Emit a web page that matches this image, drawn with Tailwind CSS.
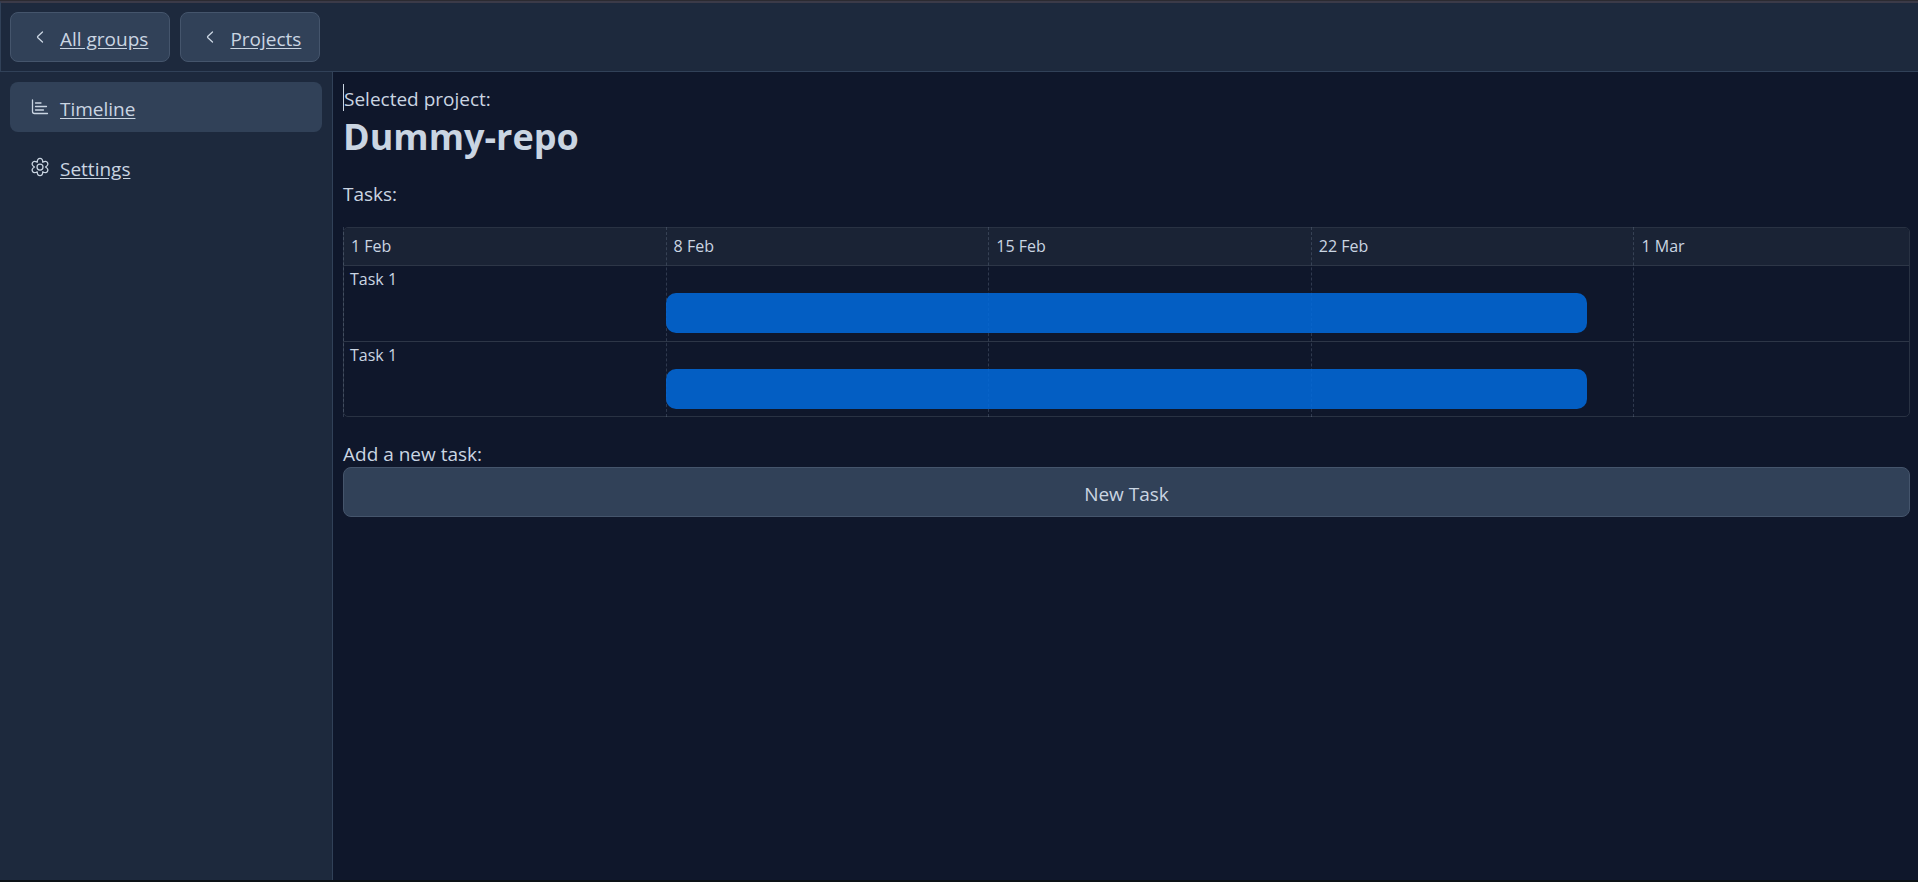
<!DOCTYPE html>
<html lang="en">
<head>
<meta charset="utf-8">
<title>Dummy-repo – Timeline</title>
<script src="https://cdn.jsdelivr.net/npm/@tailwindcss/browser@4"></script>
</head>
<body class="flex min-h-screen flex-col bg-slate-900 font-['Segoe_UI','Open_Sans',sans-serif] text-[19px] leading-[30px] text-slate-300">
<div class="h-px bg-[#2b2a31]"></div>
<header class="flex gap-[10px] border border-t-2 border-r-0 border-slate-700 border-t-[#3b3a48] bg-slate-800 p-[9px]">
  <a href="#" class="flex h-[50px] items-center gap-[10px] rounded-[8px] border border-slate-600 bg-slate-700 pr-[21px] pl-[19px]">
    <svg class="size-5" viewBox="0 0 20 20" fill="none" stroke="currentColor" stroke-width="1.3" stroke-linecap="round" stroke-linejoin="round" aria-hidden="true"><path d="M12.500 5 7.900 9.300Q7.200 10 7.900 10.700L12.500 15"/></svg>
    <span class="mt-1 underline underline-offset-2">All groups</span>
  </a>
  <a href="#" class="flex h-[50px] items-center gap-[10px] rounded-[8px] border border-slate-600 bg-slate-700 pr-[18px] pl-[19px]">
    <svg class="size-5" viewBox="0 0 20 20" fill="none" stroke="currentColor" stroke-width="1.3" stroke-linecap="round" stroke-linejoin="round" aria-hidden="true"><path d="M12.500 5 7.900 9.300Q7.200 10 7.900 10.700L12.500 15"/></svg>
    <span class="mt-1 underline underline-offset-2">Projects</span>
  </a>
</header>
<div class="flex flex-1">
  <nav class="flex w-[333px] shrink-0 flex-col gap-[10px] border-r border-slate-700 bg-slate-800 p-[10px]">
    <a href="#" class="flex h-[50px] items-center gap-[10px] rounded-[8px] bg-slate-700 px-5">
      <svg class="size-5" viewBox="0 0 20 20" fill="none" stroke="currentColor" stroke-width="1.3" stroke-linecap="round" aria-hidden="true"><path d="M2.500 3v11.500a2 2 0 0 0 2 2H17.500M5.500 6H11M5.500 9.500h11M5.500 13h8"/></svg>
      <span class="mt-1 underline underline-offset-2">Timeline</span>
    </a>
    <a href="#" class="flex h-[50px] items-center gap-[10px] rounded-[8px] px-5">
      <svg class="size-5" viewBox="0 0 24 24" fill="none" stroke="currentColor" stroke-width="1.5" stroke-linejoin="round" aria-hidden="true"><circle cx="12" cy="12" r="3.600"/><path d="M8.700 6.300C8.700 3.200 9.600 1.600 12 1.600S15.300 3.200 15.300 6.300C18 4.700 19.800 4.700 21 6.800S21.300 10.400 18.600 12C21.300 13.600 22.200 15.100 21 17.200S18 19.300 15.300 17.700C15.300 20.800 14.400 22.400 12 22.400S8.700 20.800 8.700 17.700C6 19.300 4.200 19.300 3 17.200S2.700 13.600 5.400 12C2.700 10.400 1.800 8.900 3 6.800S6 4.700 8.700 6.300Z"/></svg>
      <span class="mt-1 underline underline-offset-2">Settings</span>
    </a>
  </nav>
  <main class="min-w-0 flex-1 px-[10px] pt-[12px] pr-2">
    <p class="h-[27px] border-l border-slate-300 leading-[31px]">Selected project:</p>
    <h1 class="mt-px text-[36px] leading-[50px] font-bold">Dummy-repo</h1>
    <p class="mt-[17px]">Tasks:</p>
    <section class="relative mt-[18px] rounded-[5px] border border-[#293243] text-[16px]" aria-label="Timeline">
      <div class="h-[38px] rounded-t-[4px] border-b border-[#2d3647] bg-[#1a2335]"></div>
      <div class="h-[76px] border-b border-[#2d3647]">
        <div class="px-[6px] leading-[27px]">Task 1</div>
        <div class="relative z-10 h-10 rounded-[10px] bg-[#016bde]/85" style="margin-left:20.588%;width:58.824%"></div>
      </div>
      <div class="h-[74px]">
        <div class="px-[6px] leading-[27px]">Task 1</div>
        <div class="relative z-10 h-10 rounded-[10px] bg-[#016bde]/85" style="margin-left:20.588%;width:58.824%"></div>
      </div>
      <!-- Week grid laid over the rows: 34 days -->
      <div class="absolute -inset-px grid grid-cols-[7fr_7fr_7fr_7fr_6fr] leading-[38px]">
        <span class="border-l border-dashed border-slate-400/25 pl-[7px]">1 Feb</span>
        <span class="border-l border-dashed border-slate-400/25 pl-[7px]">8 Feb</span>
        <span class="border-l border-dashed border-slate-400/25 pl-[7px]">15 Feb</span>
        <span class="border-l border-dashed border-slate-400/25 pl-[7px]">22 Feb</span>
        <span class="border-l border-dashed border-slate-400/25 pl-[7px]">1 Mar</span>
      </div>
    </section>
    <p class="mt-[22px] h-[28px] leading-[30px]">Add a new task:</p>
    <button type="button" class="h-[50px] w-full rounded-[8px] border border-slate-600 bg-slate-700 pt-1">New Task</button>
  </main>
</div>
<div class="h-0.5 bg-[#0c1216]"></div>
</body>
</html>
